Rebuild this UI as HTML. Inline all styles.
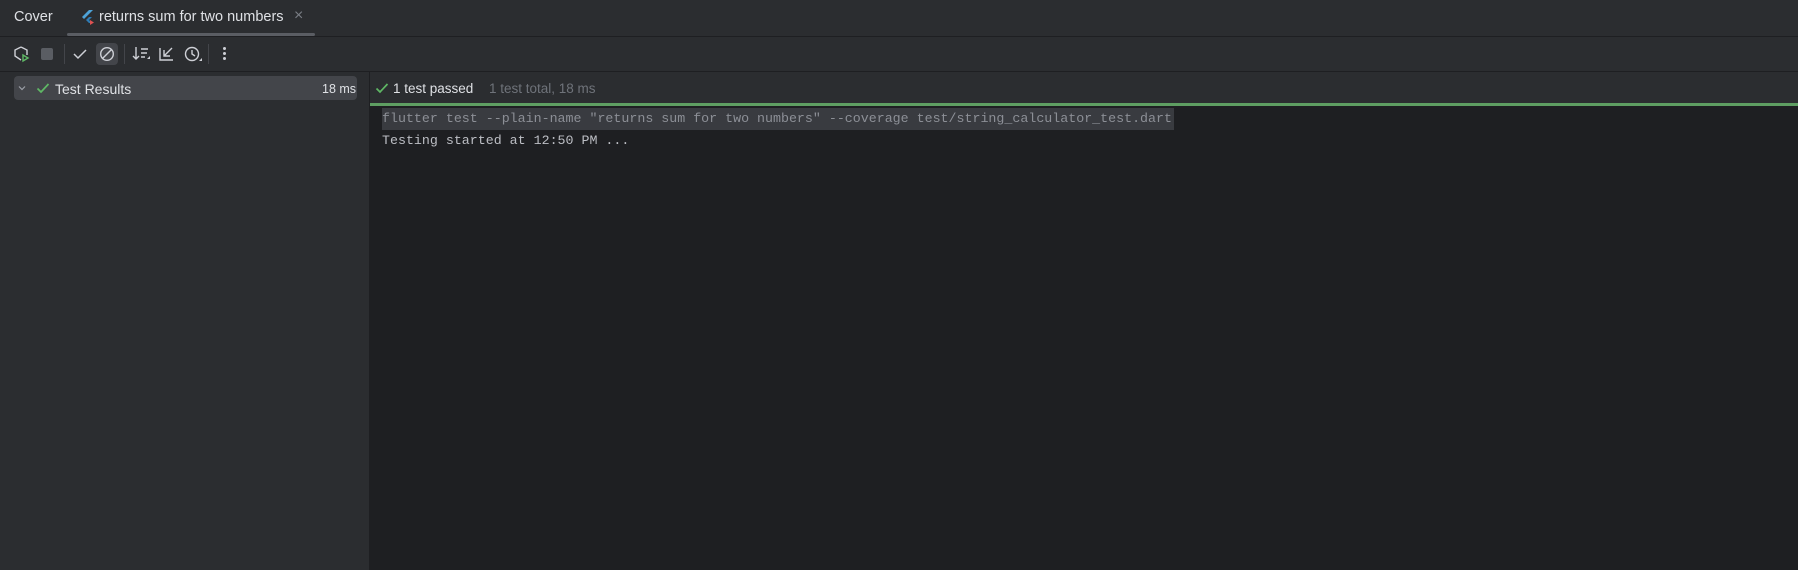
<!DOCTYPE html>
<html><head><style>
body{margin:0;width:1798px;height:570px;background:#2b2d30;font-family:"Liberation Sans",sans-serif;color:#dfe1e5;overflow:hidden;position:relative}
.a{position:absolute}
.mono{font-family:"Liberation Mono",monospace;font-size:13.3px;color:#bcbec4;white-space:pre}
</style></head><body>
<div class="a" style="left:0;top:0;width:1798px;height:36px;border-bottom:1px solid #1e1f22"></div>
<div class="a" style="left:14px;top:9px;font-size:14.5px">Cover</div>
<svg class="a" style="left:80px;top:9px" width="16" height="16" viewBox="0 0 16 16"><path d="M9 1L2 8l2 2 9-9z" fill="#4ea3d8"/><path d="M9 8L6 11l3 3h3l-3-3 3-3z" fill="#2e7bb5"/><path d="M10 11l4 2.5-4 2.5z" fill="#e05252"/></svg>
<div class="a" style="left:99px;top:9px;font-size:14.5px">returns sum for two numbers</div>
<div class="a" style="left:294px;top:7px;font-size:16px;color:#7a7e85">×</div>
<div class="a" style="left:67px;top:33px;width:248px;height:3px;background:#5a5d63;border-radius:2px"></div>
<svg class="a" style="left:12px;top:45px" width="18" height="18" viewBox="0 0 18 18" fill="none" stroke="#ced0d6" stroke-width="1.4"><path d="M9 2l6 3v5M9 2L3 5v6l6 4"/><path d="M11 10l5 3-5 3z" stroke="#5fb865"/></svg>
<div class="a" style="left:41px;top:48px;width:12px;height:12px;background:#5a5d63;border-radius:2px"></div>
<div class="a" style="left:64px;top:44px;width:1px;height:20px;background:#43454a"></div>
<svg class="a" style="left:72px;top:46px" width="16" height="16" viewBox="0 0 16 16" fill="none" stroke="#ced0d6" stroke-width="1.5"><path d="M2 8l4 4 8-8"/></svg>
<div class="a" style="left:96px;top:43px;width:22px;height:22px;background:#43454a;border-radius:4px"></div>
<svg class="a" style="left:99px;top:46px" width="16" height="16" viewBox="0 0 16 16" fill="none" stroke="#ced0d6" stroke-width="1.4"><circle cx="8" cy="8" r="6.3"/><path d="M3.5 12.5l9-9"/></svg>
<div class="a" style="left:124px;top:44px;width:1px;height:20px;background:#43454a"></div>
<svg class="a" style="left:132px;top:45px" width="20" height="18" viewBox="0 0 20 18" fill="none" stroke="#ced0d6" stroke-width="1.4"><path d="M4 2v12M1 11l3 3 3-3M9 4h7M9 8h6M9 12h4"/><path d="M15 14h3v-3z" fill="#ced0d6" stroke="none"/></svg>
<svg class="a" style="left:158px;top:45px" width="18" height="18" viewBox="0 0 18 18" fill="none" stroke="#ced0d6" stroke-width="1.4"><path d="M2 3v12h13M6 11l8-8M6 5v6h6"/></svg>
<svg class="a" style="left:183px;top:45px" width="20" height="18" viewBox="0 0 20 18" fill="none" stroke="#ced0d6" stroke-width="1.4"><circle cx="9" cy="9" r="6.5"/><path d="M9 5v4l3 2"/><path d="M16 16h3v-3z" fill="#ced0d6" stroke="none"/></svg>
<div class="a" style="left:208px;top:44px;width:1px;height:20px;background:#43454a"></div>
<div class="a" style="left:223px;top:47px;width:3px;height:3px;background:#ced0d6;border-radius:50%;box-shadow:0 5px #ced0d6,0 10px #ced0d6"></div>
<div class="a" style="left:0;top:71px;width:1798px;height:1px;background:#1e1f22"></div>
<div class="a" style="left:14px;top:76px;width:343px;height:24px;background:#43454a;border-radius:4px"></div>
<svg class="a" style="left:17px;top:83px" width="10" height="10" viewBox="0 0 10 10" fill="none" stroke="#9da0a8" stroke-width="1.2"><path d="M2 3.5l3 3 3-3"/></svg>
<svg class="a" style="left:36px;top:81px" width="14" height="14" viewBox="0 0 14 14" fill="none" stroke="#5fb865" stroke-width="1.7"><path d="M1.5 7.5l3.5 3.5 7.5-8"/></svg>
<div class="a" style="left:55px;top:81px;font-size:14px">Test Results</div>
<div class="a" style="left:322px;top:82px;font-size:12.5px">18 ms</div>
<div class="a" style="left:369px;top:72px;width:1429px;height:498px;background:#1e1f22"></div>
<div class="a" style="left:370px;top:72px;width:1428px;height:31px;background:#2b2d30"></div>
<svg class="a" style="left:375px;top:81px" width="14" height="14" viewBox="0 0 14 14" fill="none" stroke="#5fb865" stroke-width="1.7"><path d="M1.5 7.5l3.5 3.5 7.5-8"/></svg>
<div class="a" style="left:393px;top:81px;font-size:13.5px">1 test passed</div>
<div class="a" style="left:489px;top:81px;font-size:13.5px;color:#6f737a">1 test total, 18 ms</div>
<div class="a" style="left:370px;top:103px;width:1428px;height:3px;background:#5e9e62"></div>
<div class="a" style="left:382px;top:108px;width:792px;height:22px;background:#393b40"></div>
<div class="a mono" style="left:382px;top:111px;color:#8c8f96">flutter test --plain-name "returns sum for two numbers" --coverage test/string_calculator_test.dart</div>
<div class="a mono" style="left:382px;top:133px">Testing started at 12:50 PM ...</div>
</body></html>
